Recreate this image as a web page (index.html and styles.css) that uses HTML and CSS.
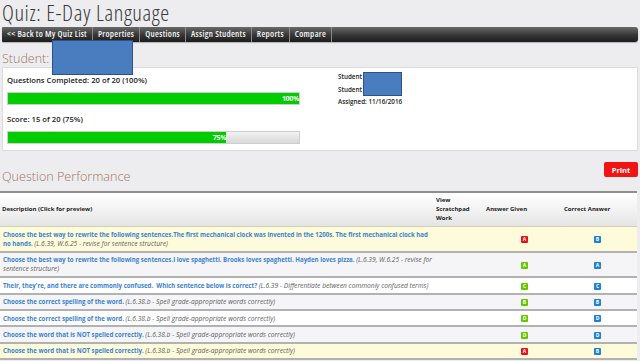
FILE: index.html
```html
<!DOCTYPE html>
<html lang="en">
<head>
    <meta charset="UTF-8">
    <meta name="viewport" content="width=device-width, initial-scale=1.0">
    <title>Quiz: E-Day Language</title>
    <link rel="stylesheet" href="styles.css">
</head>
<body>
    <div class="page">
        <h1 class="title">Quiz: E-Day Language</h1>
        <ul class="nav">
            <li>&lt;&lt; Back to My Quiz List</li>
            <li>Properties</li>
            <li>Questions</li>
            <li>Assign Students</li>
            <li>Reports</li>
            <li>Compare</li>
        </ul>

        <h2 class="student-head">Student:</h2>
        <div class="panel">
            <div class="progress-col">
                <p class="label">Questions Completed: 20 of 20 (100%)</p>
                <div class="bar"><div class="fill" style="width: 100%">100%</div></div>
                <p class="label">Score: 15 of 20 (75%)</p>
                <div class="bar"><div class="fill" style="width: 75%">75%</div></div>
            </div>
            <div class="info-col">
                <p>Student</p>
                <p>Student</p>
                <p>Assigned: 11/16/2016</p>
            </div>
        </div>

        <div class="perf-head">
            <h2>Question Performance</h2>
            <button class="print">Print</button>
        </div>

        <table class="results">
            <colgroup>
                <col class="c-desc">
                <col class="c-pad">
                <col class="c-given">
                <col class="c-correct">
            </colgroup>
            <tr>
                <th>Description (Click for preview)</th>
                <th>View Scratchpad Work</th>
                <th>Answer Given</th>
                <th>Correct Answer</th>
            </tr>
            <tr class="flag">
                <td><a>Choose the best way to rewrite the following sentences.The first mechanical clock was invented in the 1200s. The first mechanical clock had no hands.</a> <i>(L.6.39, W.6.25 - revise for sentence structure)</i></td>
                <td></td>
                <td class="given"><span class="badge wrong">A</span></td>
                <td class="correct"><span class="badge key">B</span></td>
            </tr>
            <tr class="alt">
                <td><a>Choose the best way to rewrite the following sentences.I love spaghetti. Brooks loves spaghetti. Hayden loves pizza.</a> <i>(L.6.39, W.6.25 - revise for sentence structure)</i></td>
                <td></td>
                <td class="given"><span class="badge right">A</span></td>
                <td class="correct"><span class="badge key">A</span></td>
            </tr>
            <tr>
                <td><a>Their, they're, and there are commonly confused. &nbsp;Which sentence below is correct?</a> <i>(L.6.39 - Differentiate between commonly confused terms)</i></td>
                <td></td>
                <td class="given"><span class="badge right">C</span></td>
                <td class="correct"><span class="badge key">C</span></td>
            </tr>
            <tr class="alt">
                <td><a>Choose the correct spelling of the word.</a> <i>(L.6.38.b - Spell grade-appropriate words correctly)</i></td>
                <td></td>
                <td class="given"><span class="badge right">B</span></td>
                <td class="correct"><span class="badge key">B</span></td>
            </tr>
            <tr>
                <td><a>Choose the correct spelling of the word.</a> <i>(L.6.38.b - Spell grade-appropriate words correctly)</i></td>
                <td></td>
                <td class="given"><span class="badge right">D</span></td>
                <td class="correct"><span class="badge key">D</span></td>
            </tr>
            <tr class="alt">
                <td><a>Choose the word that is NOT spelled correctly.</a> <i>(L.6.38.b - Spell grade-appropriate words correctly)</i></td>
                <td></td>
                <td class="given"><span class="badge right">D</span></td>
                <td class="correct"><span class="badge key">D</span></td>
            </tr>
            <tr class="flag">
                <td><a>Choose the word that is NOT spelled correctly.</a> <i>(L.6.38.b - Spell grade-appropriate words correctly)</i></td>
                <td></td>
                <td class="given"><span class="badge wrong">A</span></td>
                <td class="correct"><span class="badge key">B</span></td>
            </tr>
        </table>
    </div>

    <!-- name redactions laid over the screenshot -->
    <div class="redact redact-big"></div>
    <div class="redact redact-small"></div>
</body>
</html>
```

FILE: styles.css
```css
body {
    margin: 0;
    background-color: #ededf0;
    font-family: "Open Sans", "Liberation Sans", sans-serif;
    color: #222;
}
.page {
    padding: 0 2px;
}
.title {
    margin: 0 0 1px;
    font-size: 22.5px;
    font-weight: 300;
    font-stretch: 75%;
    letter-spacing: 0.6px;
    line-height: 26px;
    color: #3a3a3a;
}
.nav {
    display: flex;
    margin: 0;
    padding: 0;
    list-style: none;
    height: 15px;
    background: linear-gradient(#6a6a6a, #3a3a3a 50%, #1c1c1c);
    border-radius: 1px 3px 3px 1px;
    box-shadow: 0 1px 1px rgba(0, 0, 0, 0.25);
}
.nav li {
    padding: 0 5px;
    font-size: 8.8px;
    font-weight: 600;
    font-stretch: 75%;
    letter-spacing: 0.3px;
    line-height: 15px;
    color: #f4f4f4;
    border-right: 1px solid #8a8a8a;
}
.student-head {
    margin: 8px 0 0;
    font-size: 12.5px;
    font-weight: 300;
    line-height: 17px;
    color: #a0765a;
}
.panel {
    display: flex;
    background-color: white;
    border: 1px solid #dcdcdc;
    padding: 6px 4px 6px 4px;
}
.progress-col {
    width: 293px;
}
.label {
    margin: 0 0 6px;
    font-size: 7.7px;
    font-weight: 600;
    line-height: 12px;
}
.bar {
    height: 13px;
    margin-bottom: 8px;
    background: linear-gradient(#f2f2f2, #d8d8d8);
    border: 1px solid #cfcfcf;
    box-sizing: border-box;
}
.bar:last-child {
    margin-bottom: 0;
}
.fill {
    height: 11px;
    background-color: #00cc00;
    color: white;
    font-size: 7px;
    font-weight: 700;
    line-height: 11px;
    text-align: right;
    letter-spacing: -0.3px;
}
.info-col {
    margin-left: 38px;
    margin-top: -3px;
}
.info-col p {
    margin: 0;
    font-size: 6.3px;
    font-weight: 600;
    line-height: 12.5px;
}
.perf-head {
    display: flex;
    justify-content: space-between;
    align-items: flex-start;
    padding-top: 11px;
    margin-bottom: 4px;
}
.perf-head h2 {
    margin: 5px 0 0;
    font-size: 12.6px;
    font-weight: 300;
    line-height: 20px;
    color: #a0765a;
}
.print {
    width: 34px;
    height: 15px;
    padding: 0;
    border: none;
    border-radius: 2px;
    background-color: #f01414;
    color: white;
    font-family: "Open Sans", "Liberation Sans", sans-serif;
    font-size: 7.5px;
    font-weight: 700;
}
.results {
    width: 637px;
    margin-left: -2px;
    border-collapse: collapse;
    table-layout: fixed;
    border-top: 2px solid #8e8e8e;
}
.c-desc { width: 434px; }
.c-pad { width: 50px; }
.c-given { width: 78px; }
.c-correct { width: 75px; }
th {
    padding: 3px 1px 3px 2px;
    font-size: 6px;
    font-weight: 700;
    line-height: 9px;
    text-align: left;
    background: linear-gradient(#ffffff, #f0f0f0 60%, #e4e4e4);
    border-bottom: 1px solid #d4d0b8;
}
td {
    padding: 2.6px 1px 2.6px 3px;
    font-size: 6.1px;
    line-height: 9.2px;
    vertical-align: middle;
    background-color: white;
    border-bottom: 2px solid #b2b2b2;
}
tr.alt td {
    background-color: #f5f5f7;
}
tr.flag td {
    background-color: #fdfbd9;
}
td a {
    color: #3a82cf;
    font-weight: 700;
}
td i {
    font-size: 6.7px;
    color: #5e5e5e;
}
td.given {
    padding-left: 37px;
}
td.correct {
    padding-left: 32px;
}
.badge {
    display: inline-block;
    width: 7px;
    height: 7px;
    border-radius: 1px;
    color: white;
    font-size: 5px;
    font-weight: 700;
    line-height: 7px;
    text-align: center;
    vertical-align: middle;
}
.wrong { background-color: #e8101a; }
.right { background-color: #66c600; }
.key { background-color: #1f80d8; }
.redact {
    position: absolute;
    background-color: #4a7cc0;
    border: 1px solid #2e5088;
    box-sizing: border-box;
}
.redact-big {
    left: 52px;
    top: 40px;
    width: 81px;
    height: 35px;
}
.redact-small {
    left: 363px;
    top: 72px;
    width: 39px;
    height: 24px;
}
```
